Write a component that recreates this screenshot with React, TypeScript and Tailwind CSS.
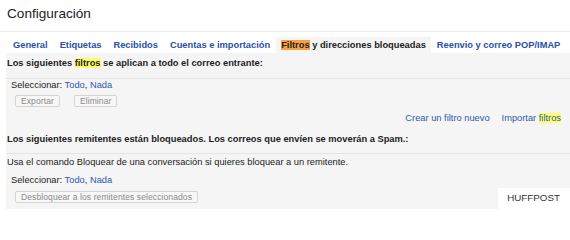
import * as React from "react";

const tabs = ["General", "Etiquetas", "Recibidos", "Cuentas e importación"];

function Hl({ children }: { children: React.ReactNode }) {
  return <span className="bg-[#ffff66]">{children}</span>;
}

function Btn({ children }: { children: React.ReactNode }) {
  return (
    <span className="inline-flex h-[12px] items-center rounded-[2px] border border-[#d4d4d4] bg-[#f7f7f7] px-[5px] text-[8.5px] tracking-[0.1px] text-[#8a8a8a]">
      {children}
    </span>
  );
}

function Select() {
  return (
    <div className="pl-[5px] leading-[12px]">
      Seleccionar: <span className="text-[#2f58b0]">Todo</span>,{" "}
      <span className="text-[#2f58b0]">Nada</span>
    </div>
  );
}

export default function App() {
  return (
    <div className="relative h-[213px] w-[570px] overflow-hidden bg-white font-['Liberation_Sans',Arial,sans-serif] text-[9.3px] text-[#222]">
      {/* cabecera */}
      <div className="flex h-[32px] items-start border-b border-[#ececec] pl-[7px] pt-[6px]">
        <h1 className="text-[13.6px] leading-[16px] text-[#222]">Configuración</h1>
      </div>

      <div className="ml-[6px]">
        {/* pestañas */}
        <div className="mt-[5px] flex h-[16px] items-center pl-[1px] font-bold leading-[16px]">
          {tabs.map((t) => (
            <span key={t} className="px-[6px] text-[#2a50a8]">
              {t}
            </span>
          ))}
          <span className="bg-[#f5f5f5] px-[5px] text-[#222]">
            <span className="bg-[#f6a33f]">Filtros</span> y direcciones bloqueadas
          </span>
          <span className="px-[6px] text-[#2a50a8]">Reenvio y correo POP/IMAP</span>
        </div>

        {/* contenido */}
        <div className="bg-[#f5f5f5] pb-[4px]">
          <div className="border-b border-[#e3e3e3] pb-[9px] pl-[1px] pt-[4px] font-bold leading-[12px]">
            Los siguientes <Hl>filtros</Hl> se aplican a todo el correo entrante:
          </div>
          <Select />
          <div className="mt-[4px] flex gap-[14px] pl-[9px]">
            <Btn>Exportar</Btn>
            <Btn>Eliminar</Btn>
          </div>
          <div className="mt-[5px] flex justify-end gap-[12px] pr-[9px] leading-[12px] text-[#2f58b0]">
            <span>Crear un filtro nuevo</span>
            <span>
              Importar <Hl>filtros</Hl>
            </span>
          </div>
          <div className="mt-[9px] border-b border-[#e3e3e3] pb-[8px] pl-[1px] font-bold leading-[12px]">
            Los siguientes remitentes están bloqueados. Los correos que envíen se moverán a Spam.:
          </div>
          <div className="mt-[2px] pl-[1px] leading-[12px]">
            Usa el comando Bloquear de una conversación si quieres bloquear a un remitente.
          </div>
          <div className="mt-[6px]">
            <Select />
          </div>
          <div className="mt-[5px] pl-[9px]">
            <Btn>Desbloquear a los remitentes seleccionados</Btn>
          </div>
        </div>
      </div>

      {/* marca de agua */}
      <div className="absolute bottom-0 right-0 flex h-[25px] w-[72px] items-start justify-end bg-white pr-[10px] pt-[4px] text-[9.8px] leading-[11px] text-[#333]">
        HUFFPOST
      </div>
    </div>
  );
}
